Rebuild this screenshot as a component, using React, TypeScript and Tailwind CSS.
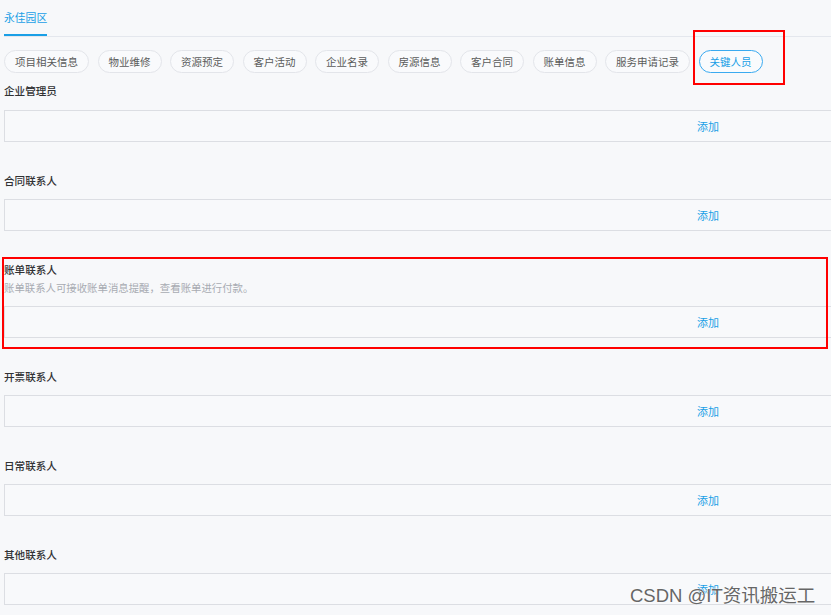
import React from "react";

const chips = [
  "项目相关信息",
  "物业维修",
  "资源预定",
  "客户活动",
  "企业名录",
  "房源信息",
  "客户合同",
  "账单信息",
  "服务申请记录",
  "关键人员",
];

type Section = { title: string; desc?: string; mark?: boolean };

const sections: Section[] = [
  { title: "企业管理员" },
  { title: "合同联系人" },
  {
    title: "账单联系人",
    desc: "账单联系人可接收账单消息提醒，查看账单进行付款。",
    mark: true,
  },
  { title: "开票联系人" },
  { title: "日常联系人" },
  { title: "其他联系人" },
];

export default function App() {
  return (
    <div
      className="relative w-[831px] h-[615px] overflow-hidden bg-[#f7f8fa] px-1"
      style={{ fontFamily: '"Noto Sans CJK SC", "Noto Sans", sans-serif' }}
    >
      {/* tab header */}
      <div className="flex h-[37px] w-[900px] border-b border-[#e4e7ed]">
        <div className="flex h-full items-center border-b-2 border-[#1a9fe6] -mb-px text-[10.8px] text-[#1a9fe6]">
          永佳园区
        </div>
      </div>

      {/* chips */}
      <div className="mt-[13px] flex gap-[8.5px]">
        {chips.map((c, i) => {
          const active = i === chips.length - 1;
          return (
            <div key={c} className="relative">
              <div
                className={
                  active
                    ? "flex h-[23px] items-center rounded-full border border-[#3aaaf0] bg-[#f9fbfd] px-[10px] text-[10.5px] text-[#1a9fe6]"
                    : "flex h-[23px] items-center rounded-full border border-[#e3e5ea] bg-[#f9fafc] px-[10px] text-[10.5px] text-[#5a5a5a]"
                }
              >
                {c}
              </div>
              {active && (
                <div className="pointer-events-none absolute left-[-6px] top-[-20px] h-[55px] w-[92px] border-2 border-[#ff0000]" />
              )}
            </div>
          );
        })}
      </div>

      {/* sections */}
      <div className="flex flex-col">
        {sections.map((s, i) => (
          <div
            key={s.title}
            className={i === 0 ? "relative mt-[9px]" : "relative mt-[30px]"}
          >
            <div className="h-[18px] text-[10.6px] font-medium leading-[18px] text-[#303133]">
              {s.title}
            </div>
            {s.desc && (
              <div className="h-[18px] text-[10.4px] leading-[18px] text-[#a8abb2]">
                {s.desc}
              </div>
            )}
            <div
              className={
                "flex h-[32px] w-[880px] shrink-0 items-center border border-[#dcdee3] bg-[#f8f9fb] pl-[692px] " +
                (i === 0 ? "mt-[10px]" : "mt-[9px]")
              }
            >
              <span className="text-[11px] text-[#1a9fe6]">添加</span>
            </div>
            {s.mark && (
              <div className="pointer-events-none absolute left-[-2px] top-[-4px] h-[92px] w-[826px] border-2 border-[#ff0000]" />
            )}
          </div>
        ))}
      </div>

      {/* watermark */}
      <div
        className="pointer-events-none absolute left-[630px] top-[584px] text-[18.5px] leading-[24px] text-[#666] whitespace-nowrap"
        style={{
          fontFamily: '"Liberation Sans", "Noto Sans CJK SC", sans-serif',
          textShadow: "0 0 2px #fff, 0 0 1px #fff",
        }}
      >
        CSDN @IT资讯搬运工
      </div>
    </div>
  );
}
